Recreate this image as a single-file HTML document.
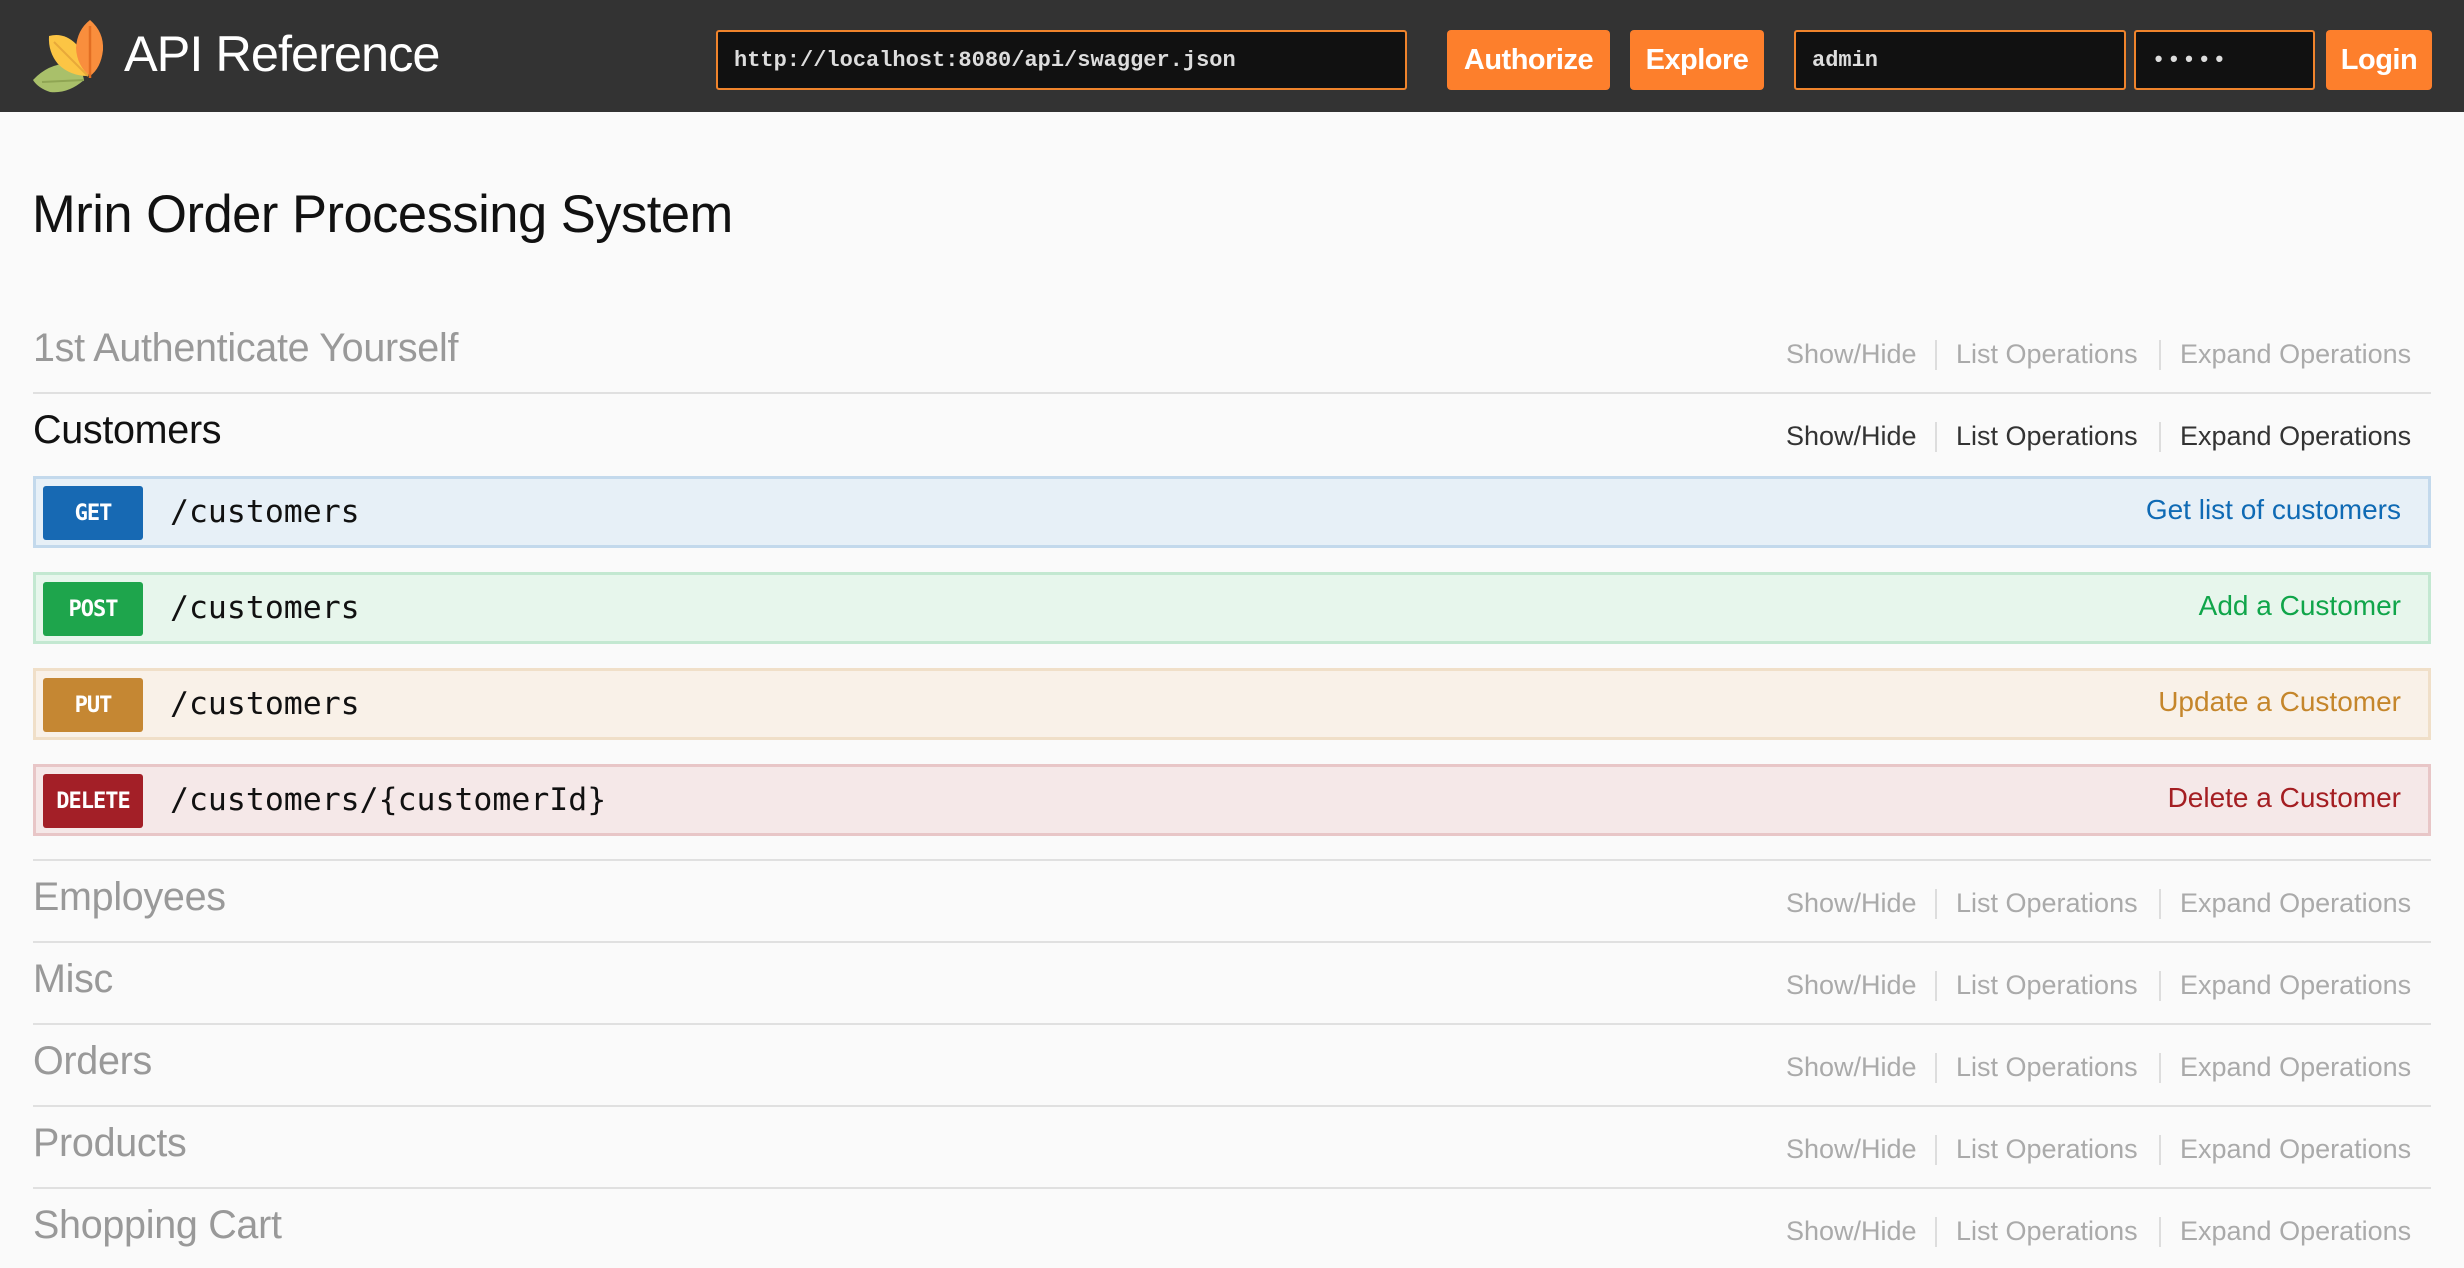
<!DOCTYPE html>
<html><head><meta charset="utf-8"><style>
*{margin:0;padding:0;box-sizing:border-box}
body{width:2464px;height:1268px;background:#fafafa;font-family:"Liberation Sans",sans-serif;position:relative;overflow:hidden}
.a{position:absolute}
#hdr{left:0;top:0;width:2464px;height:112px;background:#333}
.inp{position:absolute;top:30px;height:60px;background:#111;border:2px solid #f0842c;border-radius:3px;color:#ddd;font-family:"Liberation Mono",monospace;font-weight:bold;font-size:22px;line-height:58px;padding-left:16px}
.btn{position:absolute;top:30px;height:60px;background:#fd7f2c;border-radius:4px;color:#fff;font-size:29px;font-weight:bold;text-align:center;line-height:60px;letter-spacing:-0.5px}
.sec{position:absolute;left:33px;font-size:39.5px;color:#999;letter-spacing:-0.3px}
.lnk{position:absolute;font-size:27px;color:#aaa;white-space:nowrap}
.sep{position:absolute;width:2px;height:30px;background:#ddd}
.hr{position:absolute;left:33px;width:2398px;height:2px;background:#e0e0e0}
.op{position:absolute;left:33px;width:2398px;height:72px;border:3px solid}
.bd{position:absolute;left:7px;top:7px;width:100px;height:54px;border-radius:3px;color:#fff;font-family:"DejaVu Sans Mono",monospace;font-weight:bold;font-size:22px;text-align:center;line-height:56px;letter-spacing:-1px}
.pt{position:absolute;left:134px;top:0;line-height:66px;font-family:"DejaVu Sans Mono",monospace;font-size:31.5px;color:#111}
.ds{position:absolute;right:27px;top:0;line-height:62px;font-size:28px}
</style></head><body>
<div id="hdr" class="a"></div>
<svg class="a" style="left:20px;top:10px" width="100" height="90" viewBox="0 0 100 90">
<path d="M13 70 Q30 52 52 54 Q62 58 64 70 Q48 84 30 82 Q18 78 13 70Z" fill="#a9c06a"/>
<path d="M29 26 Q44 22 56 34 Q68 48 68 66 Q50 66 38 54 Q28 42 29 26Z" fill="#fcc544"/>
<path d="M34 32 L68 66" stroke="#e8a93a" stroke-width="2"/>
<path d="M70 10 Q84 22 83 40 Q81 58 70 66 Q57 56 56 38 Q57 20 70 10Z" fill="#f98e3d"/>
<path d="M70 16 L70 68" stroke="#e26e23" stroke-width="2.5" fill="none"/>
<path d="M22 72 L64 70" stroke="#8fa553" stroke-width="2"/>
</svg>
<div class="a" style="left:124px;top:24px;font-size:50.5px;color:#fff;letter-spacing:-1px">API Reference</div>
<div class="inp" style="left:716px;width:691px">http://localhost:8080/api/swagger.json</div>
<div class="btn" style="left:1447px;width:163px">Authorize</div>
<div class="btn" style="left:1630px;width:134px">Explore</div>
<div class="inp" style="left:1794px;width:332px">admin</div>
<div class="inp" style="left:2134px;width:181px;letter-spacing:2px">•••••</div>
<div class="btn" style="left:2326px;width:106px">Login</div>

<div class="a" style="left:32px;top:184px;font-size:52.5px;color:#111;letter-spacing:-0.5px">Mrin Order Processing System</div>

<div class="sec" style="top:326px">1st Authenticate Yourself</div>
<div class="hr" style="top:392px"></div>
<div class="sec" style="top:408px;color:#111">Customers</div>

<div class="op" style="top:476px;background:#e7f0f7;border-color:#c3d9ec"><div class="bd" style="background:#1769b3">GET</div><div class="pt">/customers</div><div class="ds" style="color:#0f6ab4">Get list of customers</div></div>
<div class="op" style="top:572px;background:#e7f6ec;border-color:#c3e8d1"><div class="bd" style="background:#1ea54c">POST</div><div class="pt">/customers</div><div class="ds" style="color:#10a54a">Add a Customer</div></div>
<div class="op" style="top:668px;background:#f9f1e8;border-color:#f0dfc8"><div class="bd" style="background:#c58733">PUT</div><div class="pt">/customers</div><div class="ds" style="color:#c5862b">Update a Customer</div></div>
<div class="op" style="top:764px;background:#f5e8e8;border-color:#e8c6c7"><div class="bd" style="background:#a31f27">DELETE</div><div class="pt">/customers/{customerId}</div><div class="ds" style="color:#a41e22">Delete a Customer</div></div>

<div class="hr" style="top:859px"></div>
<div class="sec" style="top:875px">Employees</div>
<div class="hr" style="top:941px"></div>
<div class="sec" style="top:957px">Misc</div>
<div class="hr" style="top:1023px"></div>
<div class="sec" style="top:1039px">Orders</div>
<div class="hr" style="top:1105px"></div>
<div class="sec" style="top:1121px">Products</div>
<div class="hr" style="top:1187px"></div>
<div class="sec" style="top:1203px">Shopping Cart</div>

<div class="lnk" style="left:1786px;top:339px">Show/Hide</div><div class="sep" style="left:1935px;top:340px"></div><div class="lnk" style="left:1956px;top:339px">List Operations</div><div class="sep" style="left:2159px;top:340px"></div><div class="lnk" style="left:2180px;top:339px">Expand Operations</div>
<div class="lnk" style="left:1786px;top:421px;color:#333">Show/Hide</div><div class="sep" style="left:1935px;top:422px"></div><div class="lnk" style="left:1956px;top:421px;color:#333">List Operations</div><div class="sep" style="left:2159px;top:422px"></div><div class="lnk" style="left:2180px;top:421px;color:#333">Expand Operations</div>
<div class="lnk" style="left:1786px;top:888px">Show/Hide</div><div class="sep" style="left:1935px;top:889px"></div><div class="lnk" style="left:1956px;top:888px">List Operations</div><div class="sep" style="left:2159px;top:889px"></div><div class="lnk" style="left:2180px;top:888px">Expand Operations</div>
<div class="lnk" style="left:1786px;top:970px">Show/Hide</div><div class="sep" style="left:1935px;top:971px"></div><div class="lnk" style="left:1956px;top:970px">List Operations</div><div class="sep" style="left:2159px;top:971px"></div><div class="lnk" style="left:2180px;top:970px">Expand Operations</div>
<div class="lnk" style="left:1786px;top:1052px">Show/Hide</div><div class="sep" style="left:1935px;top:1053px"></div><div class="lnk" style="left:1956px;top:1052px">List Operations</div><div class="sep" style="left:2159px;top:1053px"></div><div class="lnk" style="left:2180px;top:1052px">Expand Operations</div>
<div class="lnk" style="left:1786px;top:1134px">Show/Hide</div><div class="sep" style="left:1935px;top:1135px"></div><div class="lnk" style="left:1956px;top:1134px">List Operations</div><div class="sep" style="left:2159px;top:1135px"></div><div class="lnk" style="left:2180px;top:1134px">Expand Operations</div>
<div class="lnk" style="left:1786px;top:1216px">Show/Hide</div><div class="sep" style="left:1935px;top:1217px"></div><div class="lnk" style="left:1956px;top:1216px">List Operations</div><div class="sep" style="left:2159px;top:1217px"></div><div class="lnk" style="left:2180px;top:1216px">Expand Operations</div>
</body></html>
